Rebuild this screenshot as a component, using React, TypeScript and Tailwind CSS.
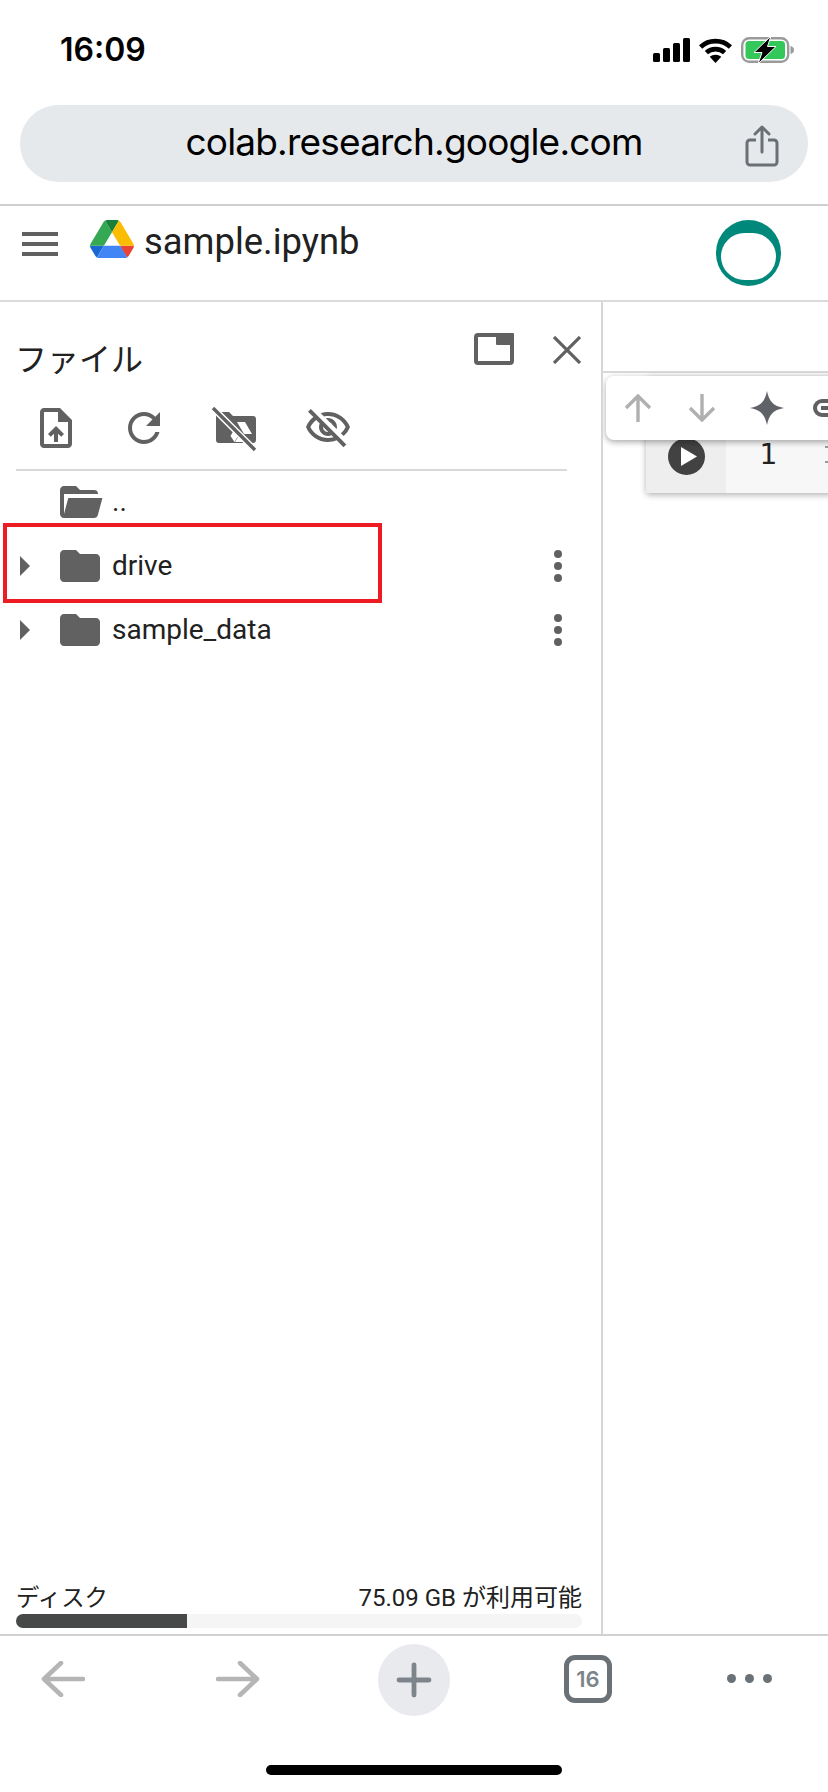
const G = "#616161";

function Icon({ d, size = 48, color = G, className = "" }: { d: string; size?: number; color?: string; className?: string }) {
  return (
    <svg width={size} height={size} viewBox="0 0 24 24" className={className} fill={color}>
      <path d={d} />
    </svg>
  );
}

const FOLDER = "M10 4H4c-1.1 0-1.99.9-1.99 2L2 18c0 1.1.9 2 2 2h16c1.1 0 2-.9 2-2V8c0-1.1-.9-2-2-2h-8l-2-2z";
const FOLDER_OPEN = "M19,20H4C2.89,20 2,19.1 2,18V6C2,4.89 2.89,4 4,4H10L12,6H19A2,2 0 0,1 21,8H21L4,8V18L6.14,10H23.21L20.93,18.5C20.7,19.37 19.92,20 19,20Z";
const UPLOAD = "M14 2H6c-1.1 0-1.99.9-1.99 2L4 20c0 1.1.89 2 1.99 2H18c1.1 0 2-.9 2-2V8l-6-6zm4 18H6V4h7v5h5v11zM8 15.01l1.41 1.41L11 14.84V19h2v-4.16l1.59 1.59L16 15.01 12.01 11 8 15.01z";
const REFRESH = "M17.65 6.35C16.2 4.9 14.21 4 12 4c-4.42 0-7.99 3.58-7.99 8s3.57 8 7.99 8c3.73 0 6.84-2.55 7.73-6h-2.08c-.82 2.33-3.04 4-5.65 4-3.31 0-6-2.69-6-6s2.69-6 6-6c1.66 0 3.14.69 4.22 1.78L13 11h7V4l-2.35 2.35z";
const EYE_OFF = "M12 6c3.79 0 7.17 2.13 8.82 5.5-.59 1.22-1.42 2.27-2.41 3.12l1.41 1.41c1.39-1.23 2.49-2.77 3.18-4.53C21.27 7.11 17 4 12 4c-1.27 0-2.49.2-3.64.57l1.65 1.65C10.66 6.09 11.32 6 12 6zm-1.07 1.14L13 9.21c.57.25 1.03.71 1.28 1.28l2.07 2.07c.08-.34.14-.7.14-1.07C16.5 9.01 14.48 7 12 7c-.37 0-.72.05-1.07.14zM2.01 3.87l2.68 2.68C3.06 7.83 1.77 9.53 1 11.5 2.73 15.89 7 19 12 19c1.52 0 2.98-.29 4.32-.82l3.42 3.42 1.41-1.41L3.42 2.45 2.01 3.87zm7.5 7.5l2.61 2.61c-.04.01-.08.02-.12.02-1.38 0-2.5-1.12-2.5-2.5 0-.05.01-.08.01-.13zm-3.4-3.4l1.75 1.75c-.23.55-.36 1.15-.36 1.78 0 2.48 2.02 4.5 4.5 4.5.63 0 1.23-.13 1.77-.36l.98.98c-.88.24-1.8.38-2.75.38-3.79 0-7.17-2.13-8.82-5.5.7-1.43 1.72-2.61 2.93-3.53z";

function DriveLogo() {
  return (
    <svg width="44" height="38" viewBox="0 0 87.3 78" preserveAspectRatio="none">
      <path d="m6.6 66.85 3.85 6.65c.8 1.4 1.95 2.5 3.3 3.3l13.75-23.8h-27.5c0 1.55.4 3.1 1.2 4.5z" fill="#1967d2" />
      <path d="m43.65 25-13.75-23.8c-1.35.8-2.5 1.9-3.3 3.3l-25.4 44a9.06 9.06 0 0 0 -1.2 4.5h27.5z" fill="#34a853" />
      <path d="m73.55 76.8c1.35-.8 2.5-1.9 3.3-3.3l1.6-2.75 7.65-13.25c.8-1.4 1.2-2.95 1.2-4.5h-27.502l5.852 11.5z" fill="#ea4335" />
      <path d="m43.65 25 13.75-23.8c-1.35-.8-2.9-1.2-4.5-1.2h-18.5c-1.6 0-3.15.45-4.5 1.2z" fill="#188038" />
      <path d="m59.8 53h-32.3l-13.75 23.8c1.35.8 2.9 1.2 4.5 1.2h50.8c1.6 0 3.15-.45 4.5-1.2z" fill="#4285f4" />
      <path d="m73.4 26.5-12.7-22c-.8-1.4-1.95-2.5-3.3-3.3l-13.75 23.8 16.15 28h27.45c0-1.55-.4-3.1-1.2-4.5z" fill="#fbbc04" />
    </svg>
  );
}

function StatusIcons() {
  return (
    <div className="flex items-center gap-[9px]">
      <svg width="37" height="24" viewBox="0 0 37 24" fill="#000">
        <rect x="0" y="15" width="7" height="9" rx="1.5" />
        <rect x="10" y="10" width="7" height="14" rx="1.5" />
        <rect x="20" y="5" width="7" height="19" rx="1.5" />
        <rect x="30" y="0" width="7" height="24" rx="1.5" />
      </svg>
      <svg width="33" height="25" viewBox="0 0 33 25" fill="none" stroke="#000" strokeWidth="4.6">
        <path d="M1.6 9C9.8 1.2 23.2 1.2 31.4 9" />
        <path d="M7.4 14.6c5-4.7 13.2-4.7 18.2 0" />
        <path d="M16.5 25l-5.8-6.2c3.2-2.8 8.4-2.8 11.6 0z" fill="#000" stroke="none" />
      </svg>
      <svg width="53" height="26" viewBox="0 0 53 26" fill="none" className="overflow-visible">
        <rect x="1.2" y="1.2" width="46" height="23.6" rx="7" stroke="#9a9a9a" strokeWidth="2.4" />
        <rect x="4.5" y="4" width="39.5" height="18" rx="3.5" fill="#34c759" />
        <path d="M49.5 9c2.2.4 3.5 2 3.5 4s-1.3 3.6-3.5 4z" fill="#9a9a9a" />
        <path d="M30 -1 13 15.5h8L17 27 35 9.5H26.5z" fill="#000" stroke="#fff" strokeWidth="1" />
      </svg>
    </div>
  );
}

function Row({ name, open }: { name: string; open?: boolean }) {
  return (
    <div className="h-[64px] flex items-center relative">
      {!open && (
        <svg width="10" height="20" viewBox="0 0 10 20" fill={G} className="absolute left-[20px] top-[22px]">
          <path d="M0 0l10 10L0 20z" />
        </svg>
      )}
      <div className="ml-[56px] w-[48px] flex">
        <Icon d={open ? FOLDER_OPEN : FOLDER} />
      </div>
      <span className="ml-[8px] text-[28px] text-[#212121] [font-family:Roboto,sans-serif] leading-none">{name}</span>
      {!open && (
        <div className="absolute left-[554px] top-[16px] flex flex-col gap-[4px]">
          <div className="w-[8px] h-[8px] rounded-full bg-[#616161]" />
          <div className="w-[8px] h-[8px] rounded-full bg-[#616161]" />
          <div className="w-[8px] h-[8px] rounded-full bg-[#616161]" />
        </div>
      )}
    </div>
  );
}

export default function App() {
  return (
    <div className="w-[828px] h-[1792px] bg-white flex flex-col overflow-hidden relative [font-family:Inter,sans-serif]">
      {/* status bar */}
      <div className="h-[105px] flex justify-between items-start pl-[60px] pt-[30px] pr-[34px]">
        <span className="text-[32px] leading-[40px] font-semibold text-black">16:09</span>
        <div className="mt-[7px]"><StatusIcons /></div>
      </div>

      {/* url bar */}
      <div className="h-[77px] mx-[20px] rounded-[38px] bg-[#e6e9ec] relative flex items-center justify-center">
        <span className="text-[37px] text-black leading-none pb-[4px] tracking-[-0.8px]">colab.research.google.com</span>
        <svg width="34" height="42" viewBox="0 0 34 42" className="absolute right-[29px] top-[20px]" fill="none" stroke="#6b7075" strokeWidth="3">
          <path d="M11 15H5a3 3 0 0 0-3 3v19a3 3 0 0 0 3 3h24a3 3 0 0 0 3-3V18a3 3 0 0 0-3-3h-6" />
          <path d="M17 27V2M10 9l7-7 7 7" strokeLinecap="round" strokeLinejoin="round" />
        </svg>
      </div>
      <div className="h-[22px]" />

      {/* colab header */}
      <div className="h-[98px] border-t-[2px] border-b-[2px] border-t-[#cfcfcf] border-b-[#dadada] relative flex items-start">
        <div className="ml-[22px] mt-[26px] w-[36px] flex flex-col gap-[6px]">
          <div className="h-[4px] bg-[#616161]" />
          <div className="h-[4px] bg-[#616161]" />
          <div className="h-[4px] bg-[#616161]" />
        </div>
        <div className="ml-[32px] mt-[14px]"><DriveLogo /></div>
        <span className="ml-[10px] mt-[16px] text-[36.4px] leading-[40px] text-[#212121] [font-family:Roboto,sans-serif]">sample.ipynb</span>
        <div className="absolute left-[716px] top-[14px] w-[65px] h-[66px]">
          <div className="w-full h-full rounded-full bg-[#00897b]" />
          <div className="absolute left-[5px] top-[13px] w-[55px] h-[47px] rounded-full bg-white" />
        </div>
      </div>

      {/* main */}
      <div className="flex-1 flex min-h-0">
        {/* files panel */}
        <div className="w-[603px] shrink-0 border-r-[2px] border-[#d6d6d6] flex flex-col relative">
          <div className="h-[92px] relative pl-[15px] pt-[33px]">
            <span className="text-[32px] leading-[44px] text-[#212121] [font-family:'Noto_Sans_CJK_JP',sans-serif]">ファイル</span>
            <svg width="40" height="32" viewBox="0 0 40 32" className="absolute left-[474px] top-[31px]">
              <rect x="2" y="2" width="36" height="28" rx="2" fill="none" stroke={G} strokeWidth="4" />
              <rect x="22" y="0" width="18" height="12" rx="1" fill={G} />
            </svg>
            <svg width="28" height="28" viewBox="0 0 28 28" className="absolute left-[553px] top-[34px]" stroke={G} strokeWidth="3.2">
              <path d="M1 1l26 26M27 1L1 27" />
            </svg>
          </div>
          <div className="h-[75px] relative">
            <div className="absolute left-[32px] top-[10px]"><Icon d={UPLOAD} /></div>
            <div className="absolute left-[120px] top-[10px]"><Icon d={REFRESH} /></div>
            <svg width="48" height="48" viewBox="0 0 48 48" className="absolute left-[210px] top-[10px]">
              <path d="M8 8h11l4 4h20a3 3 0 0 1 3 3v21a3 3 0 0 1-3 3H9a3 3 0 0 1-3-3V10a2 2 0 0 1 2-2z" fill={G} />
              <path d="M27 18h8l7 12h-8zM24 26l4 6-3.5 6-4-6zM28 33h7l3 5h-13z" fill="#fff" />
              <path d="M3 4l42 42" stroke="#fff" strokeWidth="6.5" />
              <path d="M3 4l42 42" stroke={G} strokeWidth="3.4" />
            </svg>
            <div className="absolute left-[304px] top-[10px]"><Icon d={EYE_OFF} /></div>
          </div>
          <div className="mx-[16px] w-[551px] h-[2px] bg-[#d9d9d9]" />
          <div className="-mt-[1px]">
            <Row name=".." open />
            <Row name="drive" />
            <Row name="sample_data" />
          </div>

          <div className="mt-auto mx-[16px] w-[566px]">
            <div className="flex justify-between items-end text-[24px] leading-[30px] text-[#212121] [font-family:Roboto,'Noto_Sans_CJK_JP',sans-serif]">
              <span className="text-[23.4px]">ディスク</span>
              <span>75.09 GB が利用可能</span>
            </div>
            <div className="h-[14px] rounded-full bg-[#f5f5f5] overflow-hidden mt-[1px]">
              <div className="h-full w-[171px] bg-[#474948]" />
            </div>
          </div>
          <div className="h-[6px]" />
        </div>

        {/* notebook area */}
        <div className="flex-1 relative overflow-hidden">
          <div className="h-[69px]" />
          <div className="h-[2px] bg-[#dadada]" />
          <div className="ml-[43px] mt-[3px] w-[300px] h-[117px] flex rounded-[4px] shadow-[0_2px_6px_rgba(0,0,0,0.3)] bg-[#f7f7f7] relative">
            <div className="w-[80px] bg-[#eeeeee] flex justify-center pt-[62px]">
              <svg width="37" height="37" viewBox="0 0 37 37" className="shrink-0">
                <circle cx="18.5" cy="18.5" r="18.5" fill="#424242" />
                <path d="M13 9l16 9.5L13 28z" fill="#fff" />
              </svg>
            </div>
            <div className="w-[85px] text-center pt-[61px] text-[28px] leading-[36px] text-[#212121] [font-family:'DejaVu_Sans',sans-serif]">1</div>
            <div className="flex flex-col ml-[14px] pt-[70px] gap-[13px]">
              <div className="w-[8px] h-[2px] bg-[#9a9a9a]" />
              <div className="w-[8px] h-[2px] bg-[#9a9a9a]" />
            </div>
          </div>
          {/* floating cell toolbar */}
          <div className="absolute left-[3px] top-[74px] w-[300px] h-[64px] rounded-[8px] bg-white shadow-[0_2px_6px_rgba(0,0,0,0.35)]">
            <svg width="28" height="28" viewBox="0 0 28 28" className="absolute left-[18px] top-[18px]" fill="none" stroke="#b0b0b0" strokeWidth="3.4">
              <path d="M14 28V2M2 14L14 2l12 12" />
            </svg>
            <svg width="28" height="28" viewBox="0 0 28 28" className="absolute left-[82px] top-[18px]" fill="none" stroke="#b0b0b0" strokeWidth="3.4">
              <path d="M14 0v26M2 14l12 12 12-12" />
            </svg>
            <svg width="34" height="34" viewBox="0 0 34 34" className="absolute left-[144px] top-[15px]" fill="#5f6368">
              <path d="M17 0c2 10 6 15 17 17-11 2-15 7-17 17-2-10-6-15-17-17 11-2 15-7 17-17z" />
            </svg>
            <svg width="30" height="18" viewBox="0 0 30 18" className="absolute left-[207px] top-[23px]" fill="none" stroke="#616161" strokeWidth="4">
              <path d="M28 2H9a7 7 0 0 0 0 14h19" />
              <path d="M8 9h20" />
            </svg>
          </div>
        </div>
      </div>

      {/* bottom toolbar */}
      <div className="h-[158px] border-t-[2px] border-[#d0d0d0] relative flex flex-col items-center">
        <div className="w-full relative h-[120px]">
          <svg width="44" height="36" viewBox="0 0 44 36" className="absolute left-[41px] top-[25px]" fill="none" stroke="#b5b5b5" strokeWidth="4.6" strokeLinecap="round" strokeLinejoin="round">
            <path d="M42 18H3M20 2L3 18l17 16" />
          </svg>
          <svg width="44" height="36" viewBox="0 0 44 36" className="absolute left-[216px] top-[25px]" fill="none" stroke="#b5b5b5" strokeWidth="4.6" strokeLinecap="round" strokeLinejoin="round">
            <path d="M2 18h39M24 2l17 16-17 16" />
          </svg>
          <div className="absolute left-[378px] top-[8px] w-[72px] h-[72px] rounded-full bg-[#e9eaee] flex items-center justify-center">
            <svg width="36" height="36" viewBox="0 0 36 36" stroke="#7d858b" strokeWidth="4.8" strokeLinecap="round">
              <path d="M18 3v30M3 18h30" />
            </svg>
          </div>
          <div className="absolute left-[564px] top-[19px] w-[48px] h-[48px] rounded-[11px] border-[5px] border-[#6b7277] flex items-center justify-center text-[22px] font-semibold text-[#7d858b]">16</div>
          <div className="absolute left-[727px] top-[38px] flex gap-[9px]">
            <div className="w-[9px] h-[9px] rounded-full bg-[#6b7277]" />
            <div className="w-[9px] h-[9px] rounded-full bg-[#6b7277]" />
            <div className="w-[9px] h-[9px] rounded-full bg-[#6b7277]" />
          </div>
        </div>
        <div className="mt-[9px] w-[296px] h-[10px] rounded-full bg-black" />
      </div>

      {/* red annotation */}
      <div className="absolute left-[3px] top-[523px] w-[379px] h-[80px] border-[4px] border-[#ed1c24]" />
    </div>
  );
}
